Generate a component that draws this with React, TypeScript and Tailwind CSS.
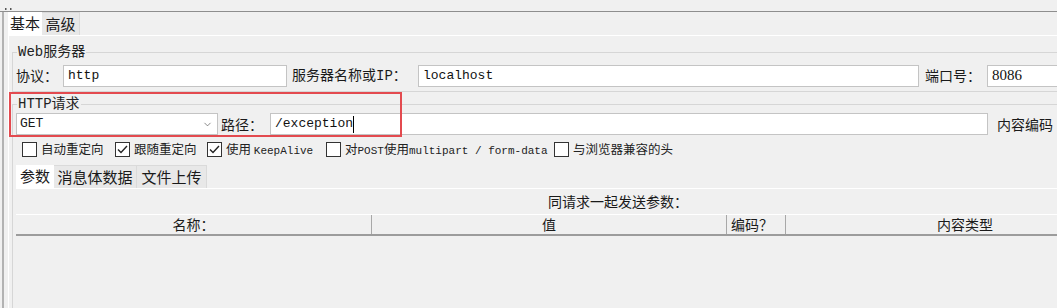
import React from 'react';
import { ChevronDown } from 'lucide-react';

const mono = "font-['Liberation_Mono','Noto_Sans_CJK_SC',monospace]";

const Field = ({ value, width, serif = false, caret = false }: { value: string; width: string; serif?: boolean; caret?: boolean }) => (
  <div
    className={`${width} shrink-0 h-[22px] bg-white border border-[#c4c4c4] flex items-center pl-[4px] text-[13px] text-[#111] ${
      serif ? "font-['Liberation_Serif',serif] text-[15px]" : mono
    }`}
  >
    <span>{value}</span>
    {caret && <span className="w-px h-[17px] bg-black" />}
  </div>
);

const CheckBox = ({ label, checked = false, width }: { label: React.ReactNode; checked?: boolean; width: string }) => (
  <div className={`${width} shrink-0 flex items-center gap-[4px]`}>
    <div className="w-[15px] h-[15px] shrink-0 bg-white border border-[#333] flex items-center justify-center">
      {checked && (
        <svg width="11" height="9" viewBox="0 0 11 9">
          <path d="M1 4.5 L4 7.5 L10 1" fill="none" stroke="#222" strokeWidth="1.4" />
        </svg>
      )}
    </div>
    <span className="text-[12.5px] text-[#222] whitespace-nowrap">{label}</span>
  </div>
);

const Legend = ({ text }: { text: string }) => (
  <div className={`-mt-[9px] ml-[1px] w-fit h-[16px] leading-[16px] px-[1px] bg-[#f0f0f0] text-[14px] text-[#222] ${mono}`}>
    {text}
  </div>
);

export default function App() {
  return (
    <div className="relative w-[1057px] h-[308px] overflow-hidden bg-[#f0f0f0] font-['Noto_Sans_CJK_SC',sans-serif] text-[#1a1a1a]">
      {/* strip above the window */}
      <div className="h-[12px] border-b border-[#8e8e8e] flex items-end pl-[5px] pb-[1px]">
        <svg width="7" height="2" viewBox="0 0 7 2">
          <rect x="0" y="0" width="1.5" height="2" fill="#555" />
          <rect x="5" y="0" width="1.5" height="2" fill="#555" />
        </svg>
      </div>

      <div className="ml-[2px] border-l-2 border-[#b2b2b2] h-full pl-[4px]">
        {/* top tabs */}
        <div className="flex h-[23px] text-[15px]">
          <div className="w-[34px] bg-white flex items-center justify-center">基本</div>
          <div className="w-[38px] bg-[#e8e8e8] border-t border-r border-[#dadada] flex items-center justify-center">高级</div>
        </div>

        <div className="border-t border-l border-white pl-[3px] pr-0">
          {/* Web服务器 */}
          <div className="mt-[16px] border-t border-l border-b border-[#d6d6d6] pl-[3px] pb-[4px]">
            <Legend text="Web服务器" />
            <div className="mt-[4px] flex items-center text-[14px] whitespace-nowrap">
              <span className="w-[47px] shrink-0">协议：</span>
              <Field value="http" width="w-[224px]" />
              <span className="ml-[5px] w-[126px] shrink-0">
                服务器名称或<span className={mono}>IP</span>：
              </span>
              <Field value="localhost" width="w-[501px]" />
              <span className="ml-[6px] w-[62px] shrink-0">端口号：</span>
              <Field value="8086" width="w-[100px]" serif />
            </div>
          </div>

          {/* HTTP请求 */}
          <div className="mt-[12px] border-t border-l border-[#d6d6d6] pl-[3px] h-[220px]">
            <Legend text="HTTP请求" />
            <div className="mt-[1px] flex items-center text-[14px] whitespace-nowrap">
              <div className={`w-[202px] shrink-0 h-[22px] bg-white border border-[#c4c4c4] flex items-center justify-between pl-[3px] pr-[4px] text-[13px] ${mono}`}>
                <span>GET</span>
                <ChevronDown size={11} strokeWidth={1.5} className="text-[#555]" />
              </div>
              <span className="ml-[3px] w-[49px] shrink-0">路径：</span>
              <Field value="/exception" width="w-[718px]" caret />
              <span className="ml-[9px] shrink-0">内容编码</span>
            </div>

            <div className="mt-[7px] pl-[6px] flex items-center h-[15px]">
              <CheckBox width="w-[93px]" label="自动重定向" />
              <CheckBox width="w-[92px]" label="跟随重定向" checked />
              <CheckBox
                width="w-[119px]"
                checked
                label={
                  <>
                    使用 <span className={`${mono} text-[11px]`}>KeepAlive</span>
                  </>
                }
              />
              <CheckBox
                width="w-[228px]"
                label={
                  <>
                    对<span className={`${mono} text-[11px]`}>POST</span>使用
                    <span className={`${mono} text-[11px]`}>multipart / form-data</span>
                  </>
                }
              />
              <CheckBox width="w-[130px]" label="与浏览器兼容的头" />
            </div>

            {/* parameter tabs */}
            <div className="mt-[8px] flex h-[23px] text-[15px]">
              <div className="w-[38px] shrink-0 bg-white flex items-center justify-center">参数</div>
              <div className="w-[83px] shrink-0 bg-[#e8e8e8] border-t border-r border-[#dadada] flex items-center justify-center">消息体数据</div>
              <div className="w-[70px] shrink-0 bg-[#e8e8e8] border-t border-r border-[#dadada] flex items-center justify-center">文件上传</div>
            </div>

            <div className="border-t border-white">
              <div className="h-[25px] pl-[532px] flex items-center text-[14px] whitespace-nowrap">同请求一起发送参数：</div>
              <div className="flex h-[22px] w-[1128px] border-t border-white border-b-2 border-b-[#9c9c9c] text-[14px] whitespace-nowrap">
                <div className="w-[356px] shrink-0 border-r border-[#a8a8a8] flex items-center justify-center">名称：</div>
                <div className="w-[355px] shrink-0 border-r border-[#a8a8a8] flex items-center justify-center">值</div>
                <div className="w-[59px] shrink-0 border-r border-[#a8a8a8] flex items-center pl-[4px]">编码？</div>
                <div className="w-[358px] shrink-0 flex items-center justify-center">内容类型</div>
              </div>
            </div>
          </div>
        </div>
      </div>

      {/* red annotation frame */}
      <div className="absolute left-[9px] top-[92px] w-[393px] h-[45px] border-2 border-[#e34a4f] pointer-events-none" />
    </div>
  );
}
